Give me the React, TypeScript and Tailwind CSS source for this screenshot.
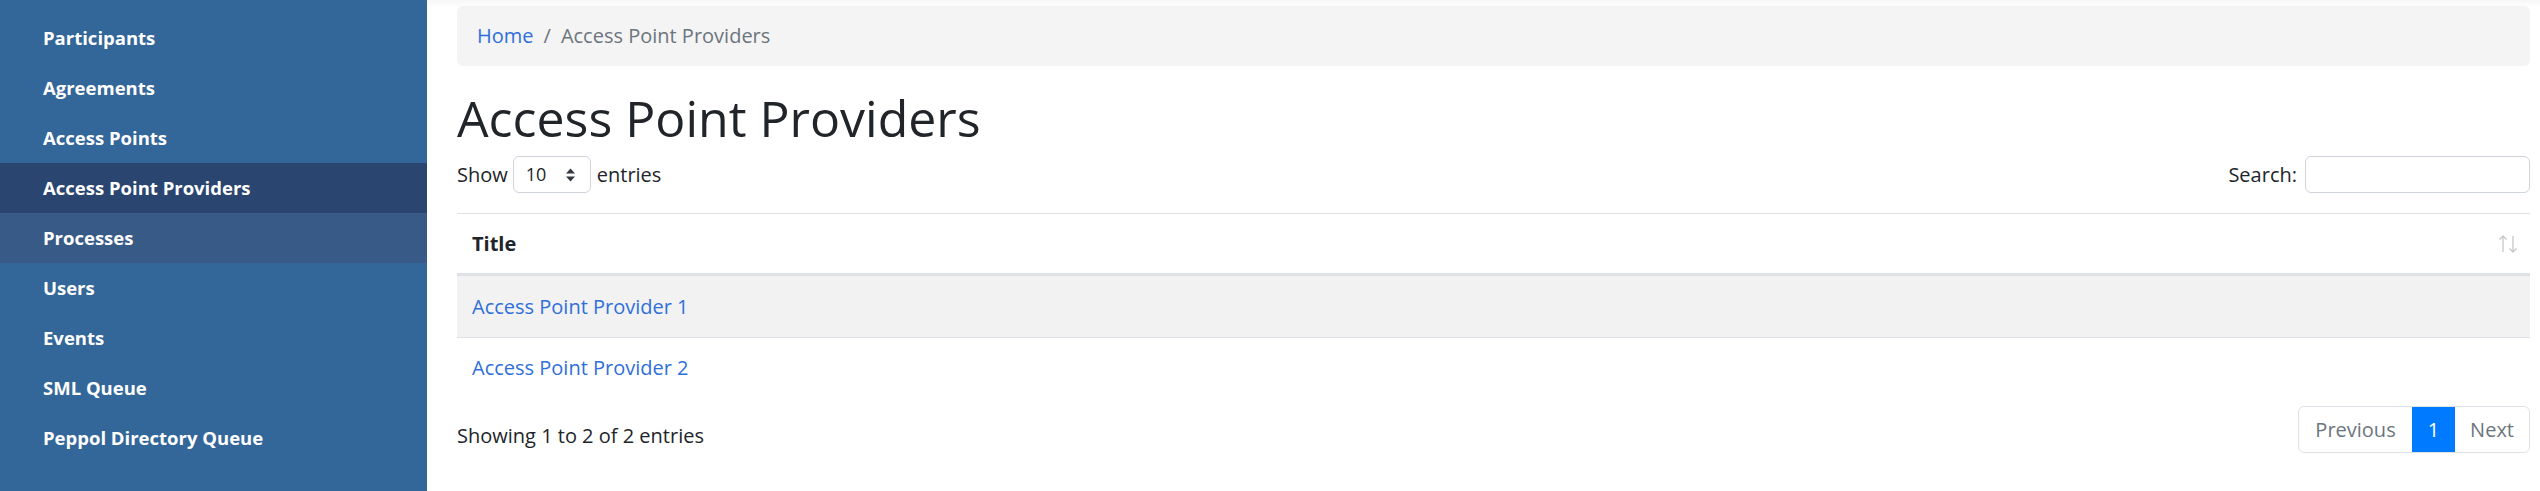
import React from "react";

const navItems = [
  "Participants",
  "Agreements",
  "Access Points",
  "Access Point Providers",
  "Processes",
  "Users",
  "Events",
  "SML Queue",
  "Peppol Directory Queue",
];

function Sidebar() {
  return (
    <aside className="w-[427px] shrink-0 bg-[#336699] pt-[13px] min-h-[491px]">
      <ul>
        {navItems.map((item) => {
          const active = item === "Access Point Providers";
          const hover = item === "Processes";
          return (
            <li
              key={item}
              className={
                "h-[50px] flex items-center pl-[43px] text-white font-bold text-[18.5px] " +
                (active ? "bg-[#294570]" : hover ? "bg-[#385a87]" : "")
              }
            >
              {item}
            </li>
          );
        })}
      </ul>
    </aside>
  );
}

function SortIcon() {
  return (
    <svg width="20" height="20" viewBox="0 0 20 20" className="text-[#c4c7ca] mr-[12px]" fill="none" stroke="currentColor" strokeWidth="1.3">
      <path d="M5 18 V2" />
      <path d="M1.5 5.5 L5 2 L8.5 5.5" />
      <path d="M15 2 V18" />
      <path d="M11.5 14.5 L15 18 L18.5 14.5" />
    </svg>
  );
}

function SelectArrows() {
  return (
    <svg width="11" height="16" viewBox="0 0 11 16" className="text-[#343a40]">
      <path d="M5.5 1.5 L10 6.5 H1 Z" fill="currentColor" />
      <path d="M5.5 14.5 L10 9.5 H1 Z" fill="currentColor" />
    </svg>
  );
}

export default function App() {
  return (
    <div
      className="flex w-[2540px] min-h-[491px] bg-white text-[#212529] overflow-hidden"
      style={{ fontFamily: '"Open Sans", "Noto Sans", sans-serif' }}
    >
      <Sidebar />
      <main className="flex-1 pl-[30px] pr-[10px] pt-[6px] bg-[linear-gradient(to_bottom,#f7f7f7,#ffffff_8px)]">
        <nav className="h-[60px] rounded-[6px] bg-[#f4f4f4] px-[20px] flex items-center text-[20px]">
          <a className="text-[#2f6fdb]">Home</a>
          <span className="px-[10px] text-[#6c757d]">/</span>
          <span className="text-[#6c757d]">Access Point Providers</span>
        </nav>

        <h1 className="mt-[22px] text-[50px] leading-[60px] font-normal">Access Point Providers</h1>

        <div className="mt-[8px] flex items-center justify-between h-[37px] text-[20px]">
          <div className="flex items-center">
            <span>Show</span>
            <div className="ml-[5px] mr-[6px] w-[78px] h-[37px] rounded-[6px] border border-[#ced4da] flex items-center justify-between pl-[12px] pr-[14px] text-[18px]">
              <span>10</span>
              <SelectArrows />
            </div>
            <span>entries</span>
          </div>
          <div className="flex items-center">
            <span className="mr-[8px]">Search:</span>
            <div className="w-[225px] h-[37px] rounded-[6px] border border-[#ced4da]" />
          </div>
        </div>

        <div className="mt-[20px] border-t border-[#dee2e6]">
          <div className="h-[62px] flex items-center justify-between pl-[15px] border-b-[3px] border-[#dee2e6]">
            <span className="font-bold text-[20px]">Title</span>
            <SortIcon />
          </div>
          <div className="h-[61px] flex items-center px-[15px] bg-[#f2f2f2] text-[20px] text-[#2f6fdb]">
            Access Point Provider 1
          </div>
          <div className="h-[61px] flex items-center px-[15px] border-t border-[#dee2e6] text-[20px] text-[#2f6fdb]">
            Access Point Provider 2
          </div>
        </div>

        <div className="mt-[8px] flex items-start justify-between">
          <div className="pt-[15px] text-[20px] leading-[30px]">Showing 1 to 2 of 2 entries</div>
          <div className="flex h-[47px] text-[20px] rounded-[6px] border border-[#dee2e6] overflow-hidden">
            <span className="flex items-center px-[16px] text-[#6c757d]">Previous</span>
            <span className="flex items-center px-[16px] bg-[#007bff] text-white">1</span>
            <span className="flex items-center px-[15px] text-[#6c757d]">Next</span>
          </div>
        </div>
      </main>
    </div>
  );
}
